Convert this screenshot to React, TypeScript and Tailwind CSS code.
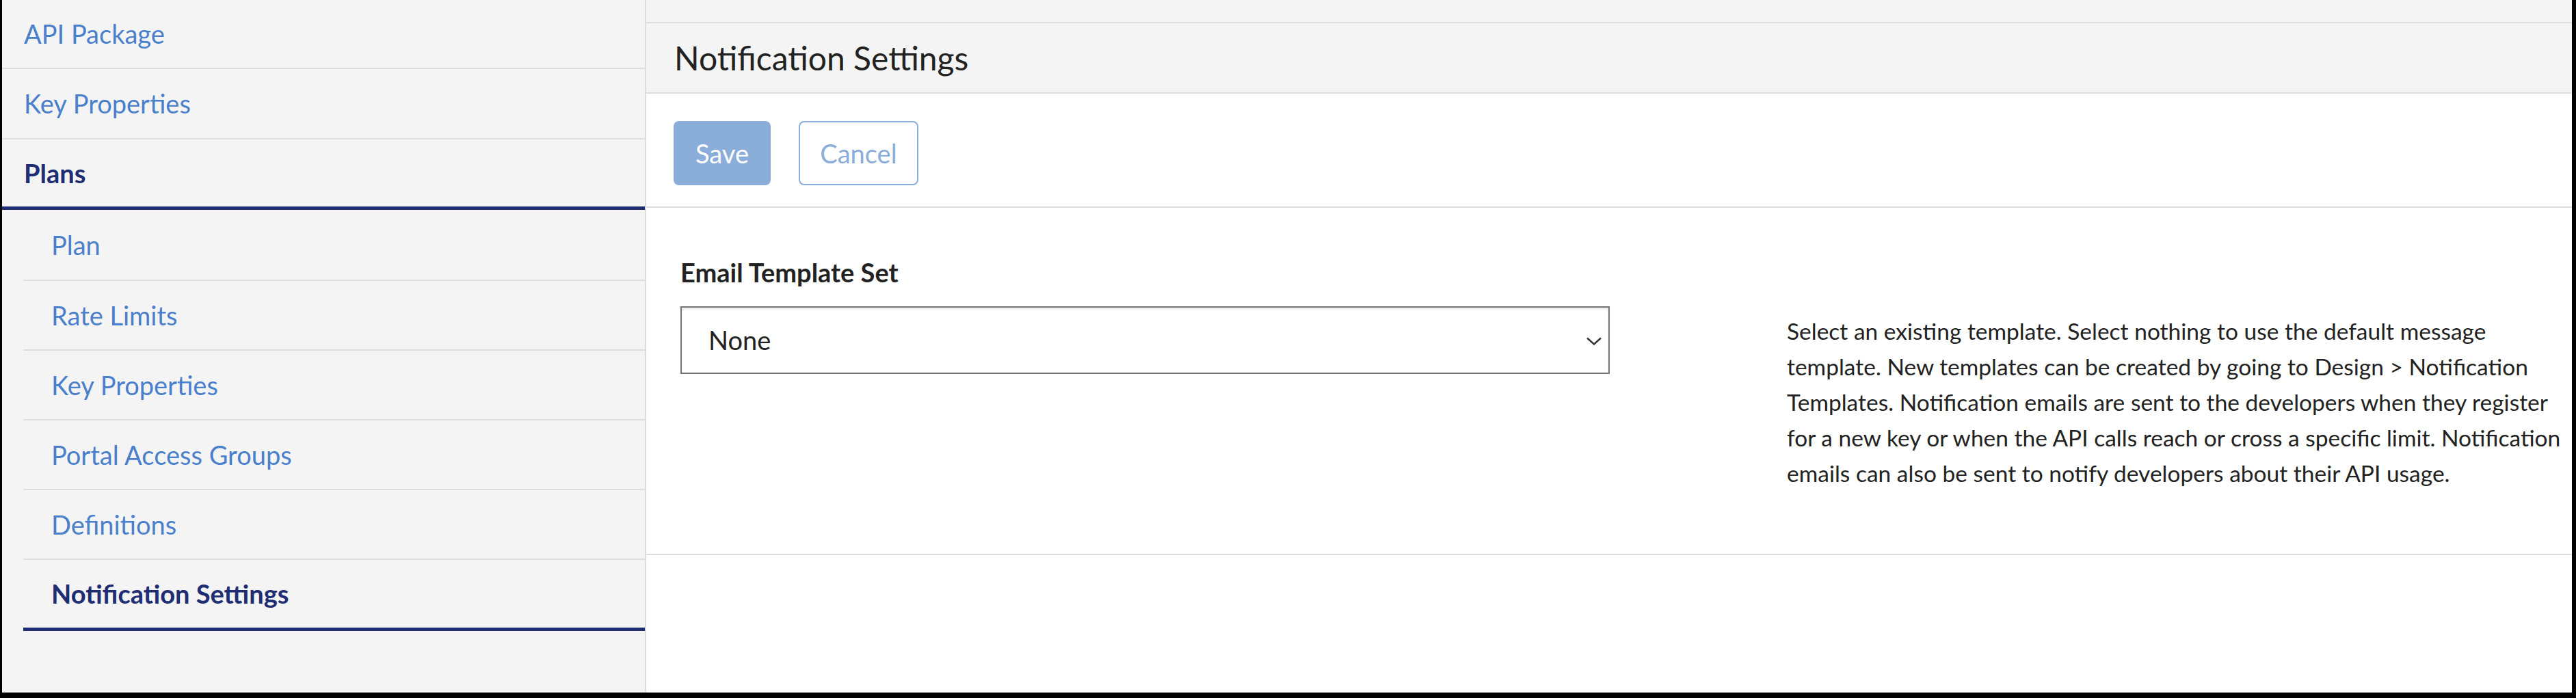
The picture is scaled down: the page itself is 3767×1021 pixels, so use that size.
import React from 'react';

const FONT = "font-['Lato','Noto_Sans',sans-serif]";

interface NavItem {
  label: string;
  active?: boolean;
}

const subItems: NavItem[] = [
  { label: 'Plan' },
  { label: 'Rate Limits' },
  { label: 'Key Properties' },
  { label: 'Portal Access Groups' },
  { label: 'Definitions' },
  { label: 'Notification Settings', active: true },
];

const Sidebar: React.FC = () => (
  <aside className="w-[942px] shrink-0 bg-[#f4f4f4] border-r-2 border-[#dddddd]">
    <div className="h-[101px] flex items-center pl-8 border-b-2 border-[#dddddd] text-[38px] text-[#4a7fcb]">
      API Package
    </div>
    <div className="h-[103px] flex items-center pl-8 border-b-2 border-[#dddddd] text-[38px] text-[#4a7fcb]">
      Key Properties
    </div>
    <div className="h-[103px] flex items-center pl-8 border-b-[5px] border-[#1f2d72] text-[38px] font-bold text-[#1f2d72]">
      Plans
    </div>
    <ul className="ml-[31px]">
      {subItems.map((item, i) => (
        <li
          key={item.label}
          className={
            item.active
              ? 'h-[104px] flex items-center pl-[41px] border-b-[5px] border-[#1f2d72] text-[38px] font-bold text-[#1f2d72]'
              : i === 0
              ? 'h-[104px] flex items-center pl-[41px] border-b-2 border-[#dddddd] text-[38px] text-[#4a7fcb]'
              : 'h-[102px] flex items-center pl-[41px] border-b-2 border-[#dddddd] text-[38px] text-[#4a7fcb]'
          }
        >
          {item.label}
        </li>
      ))}
    </ul>
  </aside>
);

const App: React.FC = () => {
  return (
    <div
      className={`${FONT} w-[3767px] h-[1021px] flex bg-white border-l-[3px] border-r-[6px] border-b-[8px] border-black overflow-hidden text-[#222222]`}
    >
      <Sidebar />

      <main className="flex-1 flex flex-col">
        <div className="h-[34px] shrink-0 bg-[#f4f4f4] border-b-2 border-[#dddddd]" />

        <div className="h-[103px] shrink-0 bg-[#f4f4f4] border-b-2 border-[#dddddd] flex items-center pl-[41px]">
          <h2 className="text-[48px] font-normal text-[#222222]">Notification Settings</h2>
        </div>

        <div className="h-[167px] shrink-0 border-b-2 border-[#dddddd] flex items-start gap-[41px] pl-10 pt-10">
          <button className="w-[142px] h-[94px] rounded-lg bg-[#8badda] text-white text-[38px]">
            Save
          </button>
          <button className="w-[175px] h-[94px] rounded-lg border-2 border-[#8badda] bg-white text-[#8badda] text-[38px]">
            Cancel
          </button>
        </div>

        <div className="h-[508px] shrink-0 border-b-2 border-[#dddddd] flex pl-[50px]">
          <div className="w-[1359px] shrink-0 pt-[71px]">
            <label className="block text-[38px] leading-[46px] font-bold text-[#222222]">
              Email Template Set
            </label>
            <div className="relative mt-[27px]">
              <select
                defaultValue="none"
                className="appearance-none w-full h-[99px] border-2 border-[#757575] bg-white pl-[39px] text-[38px] text-[#222222] shadow-[inset_0_3px_3px_rgba(0,0,0,0.08)] outline-none"
              >
                <option value="none">None</option>
              </select>
              <svg
                className="pointer-events-none absolute right-[12px] top-[45px]"
                width="22"
                height="12"
                viewBox="0 0 22 12"
                fill="none"
              >
                <path d="M1 1.5 L11 10.5 L21 1.5" stroke="#333333" strokeWidth="2.4" />
              </svg>
            </div>
          </div>

          <p className="ml-[259px] pt-[154px] whitespace-nowrap text-[33.5px] leading-[52px] text-[#222222]">
            Select an existing template. Select nothing to use the default message
            <br />
            template. New templates can be created by going to Design &gt; Notification
            <br />
            Templates. Notification emails are sent to the developers when they register
            <br />
            for a new key or when the API calls reach or cross a specific limit. Notification
            <br />
            emails can also be sent to notify developers about their API usage.
          </p>
        </div>

        <div className="flex-1" />
      </main>
    </div>
  );
};

export default App;
